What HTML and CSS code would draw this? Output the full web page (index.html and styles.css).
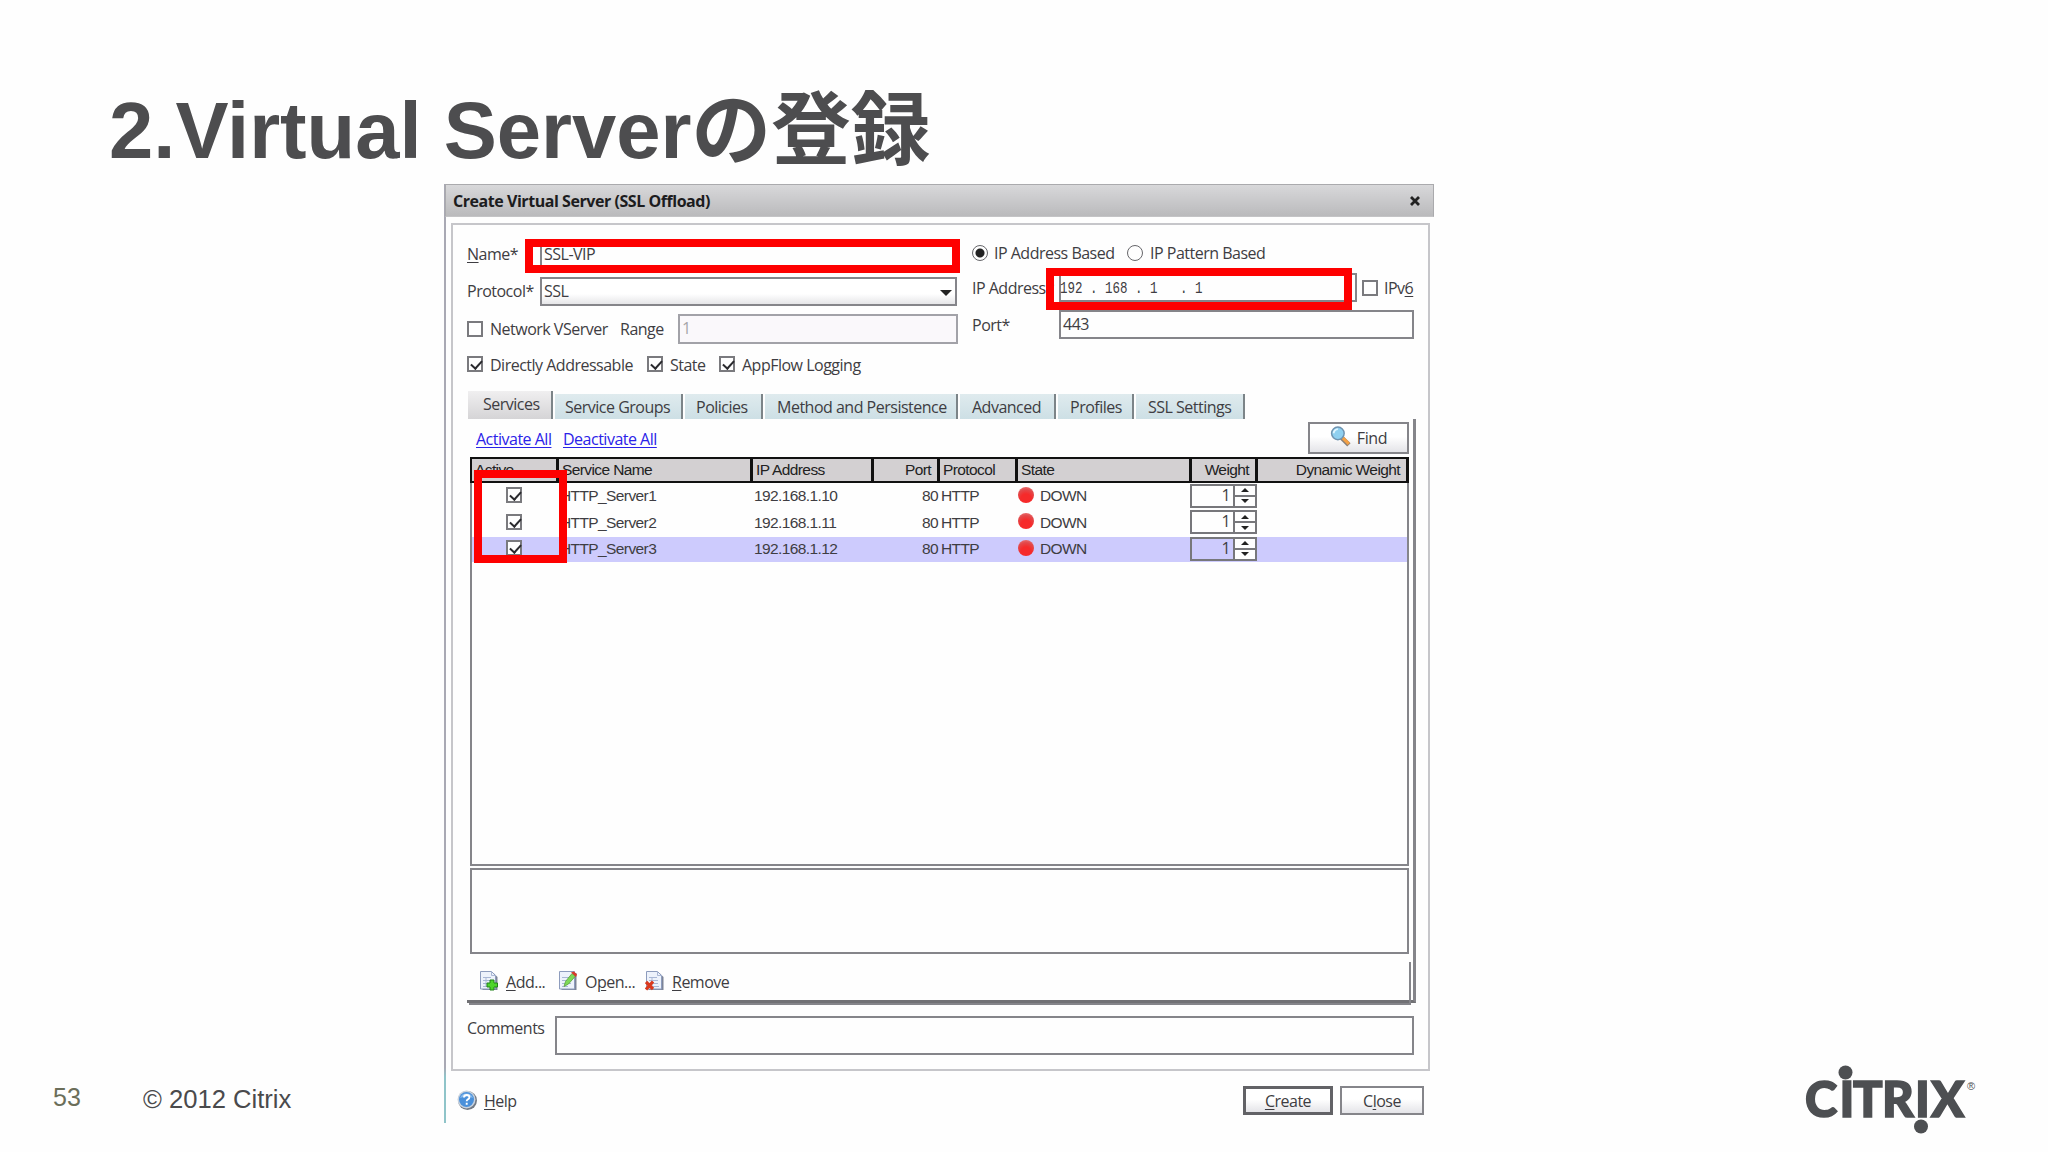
FILE: index.html
```
<!DOCTYPE html>
<html lang="ja">
<head>
    <meta charset="UTF-8">
    <title>2.Virtual Serverの登録</title>
    <link rel="stylesheet" href="styles.css">
</head>
<body>
    <div class="slide">
        <h1>2.Virtual Serverの登録</h1>

        <footer class="copyright">
            <span class="page">53</span>
            <span>© 2012 Citrix</span>
        </footer>

        <main class="dialog">
            <header class="titlebar">
                <h2>Create Virtual Server (SSL Offload)</h2>
                <svg class="close" viewBox="0 0 12 12"><path d="M2 2l8 8M10 2l-8 8"/></svg>
            </header>

            <section class="panel">
                <div class="form">
                    <div class="form-left">
                        <div class="row field">
                            <label><u>N</u>ame*</label>
                            <div class="input">SSL-VIP</div>
                        </div>
                        <div class="row field">
                            <label>Protocol*</label>
                            <div class="input select">SSL<i class="arrow-down"></i></div>
                        </div>
                        <div class="row network">
                            <i class="check"></i>
                            <label>Network VServer</label>
                            <label>Range</label>
                            <div class="input disabled">1</div>
                        </div>
                        <div class="row options">
                            <i class="check on"></i><label>Directly Addressable</label>
                            <i class="check on"></i><label>State</label>
                            <i class="check on"></i><label>AppFlow Logging</label>
                        </div>
                    </div>
                    <div class="form-right">
                        <div class="row radios">
                            <i class="radio on"></i><label>IP Address Based</label>
                            <i class="radio"></i><label>IP Pattern Based</label>
                        </div>
                        <div class="row ip">
                            <label>IP Address*</label>
                            <div class="input"><span class="ip-value">192 . 168 . 1   . 1</span></div>
                            <i class="check"></i>
                            <label>IPv<u>6</u></label>
                        </div>
                        <div class="row port">
                            <label>Port*</label>
                            <div class="input">443</div>
                        </div>
                    </div>
                </div>

                <nav class="tabs">
                    <span class="tab active">Services</span>
                    <span class="tab groups">Service Groups</span>
                    <span class="tab policies">Policies</span>
                    <span class="tab method">Method and Persistence</span>
                    <span class="tab advanced">Advanced</span>
                    <span class="tab profiles">Profiles</span>
                    <span class="tab settings">SSL Settings</span>
                </nav>

                <div class="tab-body">
                    <div class="toolbar">
                        <a>Activate All</a>
                        <a>Deactivate All</a>
                        <div class="button find">
                            <svg viewBox="0 0 20 20">
                                <path d="M11 11l7 7" stroke="#8a8078" stroke-width="4.5"/>
                                <path d="M11.5 10.5l6.5 6.5" stroke="#f5a145" stroke-width="3"/>
                                <circle cx="7.5" cy="7" r="6" fill="#8fd0f0" stroke="#6f93b0" stroke-width="1.4"/>
                                <path d="M3.5 7a4 4 0 0 1 4-4" fill="none" stroke="#e2f6ff" stroke-width="1.8"/>
                            </svg>
                            Find
                        </div>
                    </div>

                    <div class="services">
                        <div class="tr head">
                            <span>Active</span><span>Service Name</span><span>IP Address</span><span class="right">Port</span><span>Protocol</span><span>State</span><span class="right">Weight</span><span class="right">Dynamic Weight</span>
                        </div>
                        <div class="tr">
                            <span><i class="check on"></i></span><span>HTTP_Server1</span><span>192.168.1.10</span><span class="right">80</span><span>HTTP</span><span><i class="ball"></i>DOWN</span>
                            <span class="spinner"><b>1</b><i class="up"></i><i class="down"></i></span><span></span>
                        </div>
                        <div class="tr">
                            <span><i class="check on"></i></span><span>HTTP_Server2</span><span>192.168.1.11</span><span class="right">80</span><span>HTTP</span><span><i class="ball"></i>DOWN</span>
                            <span class="spinner"><b>1</b><i class="up"></i><i class="down"></i></span><span></span>
                        </div>
                        <div class="tr selected">
                            <span><i class="check on"></i></span><span>HTTP_Server3</span><span>192.168.1.12</span><span class="right">80</span><span>HTTP</span><span><i class="ball"></i>DOWN</span>
                            <span class="spinner"><b>1</b><i class="up"></i><i class="down"></i></span><span></span>
                        </div>
                    </div>

                    <div class="details"></div>

                    <div class="actions">
                        <svg viewBox="0 0 20 20">
                            <path d="M3.500 2.500h11l4 4v13h-15z" fill="#7d8497"/>
                            <path d="M1.500 1h11l4 4v13.500h-15z" fill="#edf2fb" stroke="#8d9cbd"/>
                            <path d="M12.500 1v4h4M4 7h8M4 10h9M4 13h9M4 16h6M7 7v9" fill="none" stroke="#a9b7d5"/>
                            <path d="M11 9.500h4v3h3.500v4H15v3h-4v-3H8v-4h3z" fill="#4fd52c" stroke="#22831a"/>
                        </svg>
                        <span class="add"><u>A</u>dd...</span>
                        <svg viewBox="0 0 20 20">
                            <path d="M3.500 2.500h15v17h-15z" fill="#7d8497"/>
                            <path d="M1.500 1h15v17.500h-15z" fill="#edf2fb" stroke="#8d9cbd"/>
                            <path d="M4 7h8M4 10h9M4 13h9M4 16h6" fill="none" stroke="#a9b7d5"/>
                            <path d="M6 16l1.500-5L14 3l3.500 2.500-7 8z" fill="#7ed957" stroke="#58a03a" stroke-width=".8"/>
                            <path d="M13 2l3-1 3 3-1 2.500z" fill="#d83a2a"/>
                        </svg>
                        <span class="open">O<u>p</u>en...</span>
                        <svg viewBox="0 0 20 20">
                            <path d="M3.500 2.500h11l4 4v13h-15z" fill="#7d8497"/>
                            <path d="M1.500 1h11l4 4v13.500h-15z" fill="#edf2fb" stroke="#8d9cbd"/>
                            <path d="M12.500 1v4h4M4 7h8M4 10h9M4 13h9M8 16h6M7 7v9" fill="none" stroke="#a9b7d5"/>
                            <path d="M1 11.500l7 7M8 11l-7 8" stroke="#d9391e" stroke-width="3.200"/>
                        </svg>
                        <span><u>R</u>emove</span>
                    </div>
                </div>

                <div class="comments">
                    <label>Comments</label>
                    <div class="input"></div>
                </div>
            </section>

            <div class="buttons">
                <svg viewBox="0 0 20 20">
                    <circle cx="10.500" cy="10.500" r="9.500" fill="#737a84"/>
                    <circle cx="9.500" cy="9.500" r="9" fill="#c8d2de"/>
                    <circle cx="9.500" cy="9.500" r="7.500" fill="#4a90da"/>
                    <path d="M3 8a7 7 0 0 1 13 0q-6-3-13 0" fill="#86b9ec"/>
                    <path d="M7 7.500q0-2.500 2.700-2.500t2.700 2.200q0 1.300-1.500 2.100-1.200.7-1.200 1.900M9.700 12.800v2" fill="none" stroke="#fff" stroke-width="1.900"/>
                </svg>
                <span class="help"><u>H</u>elp</span>
                <div class="button create"><span><u>C</u>reate</span></div>
                <div class="button"><span>C<u>l</u>ose</span></div>
            </div>

            <div class="highlight mark-name"></div>
            <div class="highlight mark-ip"></div>
            <div class="highlight mark-active"></div>
        </main>

        <svg class="logo" viewBox="0 0 180 80">
            <text x="0 34.500 48 77 110 126" y="53">CITRIX</text>
            <circle cx="40.500" cy="8.500" r="7"/>
            <circle cx="116" cy="62.500" r="7"/>
            <text class="reg" x="162" y="26">®</text>
        </svg>
    </div>
</body>
</html>
```
FILE: styles.css
```
* {
    box-sizing: border-box;
}
body {
    margin: 0;
    background: #fefefe;
    color: #3e3d42;
    font-family: "Open Sans", "Noto Sans", sans-serif;
    font-size: 16px;
}
.slide {
    width: 2048px;
    height: 1152px;
    display: grid;
    grid-template-columns: 444px 990px 1fr;
    grid-template-rows: 184px 939px;
    overflow: hidden;
}
h1 {
    grid-column: 1 / -1;
    margin: 0;
    padding: 73px 0 0 109px;
    font: bold 79.6px/116px "Liberation Sans", "Noto Sans CJK JP", sans-serif;
    color: #4d4d4f;
    white-space: nowrap;
}
.copyright {
    align-self: end;
    display: flex;
    padding: 0 0 9px 53px;
    font: 25.6px/30px "Liberation Sans", sans-serif;
    color: #4a4a4c;
}
.page {
    width: 90px;
    font-size: 25px;
    line-height: 27px;
    color: #6b6e5a;
}
u {
    text-underline-offset: 2px;
}
label, .tab, .actions span, .buttons span, a {
    white-space: nowrap;
    letter-spacing: -0.5px;
}

/* dialog */
.dialog {
    position: relative;
    border-left: 2px solid;
    border-image: linear-gradient(#a9a9b4 94%, #8fc4c9 95%) 1;
}
.titlebar {
    height: 33px;
    margin-left: -1px;
    padding: 0 12px 0 7px;
    display: flex;
    align-items: center;
    justify-content: space-between;
    border: 1px solid #aaaaad;
    border-bottom-color: #c4c4c6;
    background: linear-gradient(#d8d8da, #bababc);
}
h2 {
    margin: 0;
    font-size: 16px;
    font-weight: 700;
    letter-spacing: -0.45px;
    color: #1c1c1e;
}
.close {
    width: 12px;
    height: 12px;
    fill: none;
    stroke: #222;
    stroke-width: 2.8;
}
.panel {
    margin: 6px 4px 0 5px;
    height: 848px;
    padding: 15px 14px 0;
    border: 2px solid #c6c6ca;
}

/* form */
.form {
    display: grid;
    grid-template-columns: 491px 442px;
    column-gap: 14px;
}
.form-left {
    display: grid;
    grid-template-rows: 29px 29px 30px 24px;
    row-gap: 8px;
}
.form-right {
    display: grid;
    grid-template-rows: 25px 29px 29px;
    row-gap: 8px;
    align-content: start;
}
.row {
    display: grid;
    align-items: center;
}
.field {
    grid-template-columns: 73px 417px;
}
.field label {
    margin-top: -1px;
}
.network {
    grid-template-columns: 23px 130px 58px 280px;
}
.options {
    grid-template-columns: 23px 157px 23px 49px 23px auto;
}
.options label {
    margin-top: 1px;
}
.radios {
    grid-template-columns: 22px 133px 23px auto;
}
.ip {
    grid-template-columns: 87px 298px 5px 22px auto;
}
.ip .check {
    grid-column: 4;
}
.port {
    grid-template-columns: 87px 355px;
}
.input {
    position: relative;
    height: 100%;
    padding: 0 0 2px 2px;
    display: flex;
    align-items: center;
    border: 2px solid #85858a;
    background: #fefefe;
    letter-spacing: -0.5px;
}
.select {
    background: linear-gradient(#fff 60%, #e6e6e8);
}
.arrow-down {
    position: absolute;
    right: 3px;
    top: 11px;
    border: 6px solid transparent;
    border-top-color: #222;
    border-bottom: 0;
}
.disabled {
    background: #faf8fb;
    border-color: #a2a2a8;
    color: #a6a6aa;
}
.ip-value {
    margin: 3px 0 0 -3px;
    font: 17px "Liberation Mono", monospace;
    letter-spacing: 0;
    white-space: pre;
    transform: scaleX(.735);
    transform-origin: left;
}
.check {
    display: block;
    width: 16px;
    height: 16px;
    border: 2px solid #7a7a7e;
    background: #fefefe;
}
.check.on::after {
    content: "";
    display: block;
    width: 9px;
    height: 5px;
    margin: 2px 0 0 2px;
    border: solid #2a2a2e;
    border-width: 0 0 2.5px 2.5px;
    transform: rotate(-48deg);
}
.radio {
    width: 16px;
    height: 16px;
    border: 1.5px solid #66666a;
    border-radius: 50%;
}
.radio.on {
    background: radial-gradient(#222 0 4px, transparent 5px);
}

/* tabs */
.tabs {
    display: flex;
    align-items: flex-end;
    gap: 2px;
    height: 28px;
    margin-top: 15px;
    margin-left: 1px;
}
.tab {
    height: 25px;
    line-height: 27px;
    border-right: 2px solid #7c8488;
    background: linear-gradient(#dfebee, #cddfe5);
}
.tab.active {
    width: 85px;
    height: 28px;
    padding-left: 15px;
    background: linear-gradient(#f0eff0, #d5d4d6);
}
.groups {
    width: 128px;
    padding-left: 10px;
}
.policies {
    width: 78px;
    padding-left: 11px;
}
.method {
    width: 193px;
    padding-left: 12px;
}
.advanced {
    width: 96px;
    padding-left: 12px;
}
.profiles {
    width: 76px;
    padding-left: 12px;
}
.settings {
    width: 109px;
    padding-left: 12px;
}
.tab-body {
    width: 949px;
    height: 584px;
    padding: 3px 4px 0 3px;
    border-right: 3px solid #85858a;
    border-bottom: 3px solid #717175;
}
.toolbar {
    display: flex;
    height: 32px;
    padding-left: 6px;
}
a {
    width: 87px;
    line-height: 35px;
    color: #2b22e8;
    text-decoration: underline;
    text-underline-offset: 2px;
}
.button {
    height: 29px;
    display: flex;
    align-items: center;
    justify-content: center;
    border: 2px solid #85858a;
    background: linear-gradient(#fff 45%, #e4e4e8);
    letter-spacing: -0.4px;
}
.find {
    width: 101px;
    height: 32px;
    margin-left: auto;
    gap: 6px;
}
.find svg {
    width: 21px;
    height: 21px;
    margin-top: -4px;
}

/* services table */
.services {
    height: 409px;
    margin-top: 3px;
    border: 2px solid #85858a;
    border-top: 0;
    font: 15.5px "Liberation Sans", Arial, sans-serif;
    letter-spacing: -0.6px;
}
.tr {
    display: grid;
    grid-template-columns: 87px 194px 121px 66px 78px 174px 66px 1fr;
    height: 25px;
    margin-top: 1.6px;
}
.tr > span {
    display: flex;
    align-items: center;
    padding-left: 1px;
}
.tr > span:first-child {
    padding-left: 34px;
}
.tr > .right {
    justify-content: flex-end;
    padding-right: 2px;
}
.head {
    height: 26px;
    margin: 0 -2px -1px;
    border: solid #111;
    border-width: 2px 0 2px 2px;
    background: #d3d0d2;
    color: #222;
}
.tr.head > span {
    border-right: 3px solid #111;
    padding-left: 3px;
}
.tr.head > .right {
    padding-right: 6px;
}
.selected {
    background: #cdcbfd;
}
.check.on {
    flex: none;
}
.tr .check {
    margin-top: -2px;
}
.ball {
    width: 16px;
    height: 16px;
    margin: -3px 6px 0 -1px;
    border-radius: 50%;
    background: radial-gradient(circle at 50% 75%, #f62a2a 35%, #e2494b 65%, #f08a8a);
}
.tr > .spinner {
    display: grid;
    grid-template: 1fr 1fr / 1fr 20px;
    height: 24px;
    margin: 0 1px 0 -2px;
    padding: 0;
    border: 2px solid #77777b;
    align-items: stretch;
}
.spinner b {
    grid-row: 1 / 3;
    padding-right: 3px;
    border-right: 2px solid #77777b;
    font: 16px/19px "Open Sans", sans-serif;
    text-align: right;
}
.spinner i {
    display: grid;
    place-items: center;
    background: #fefefe;
}
.spinner .up {
    border-bottom: 1px solid #77777b;
}
.spinner .down {
    border-top: 1px solid #77777b;
}
.spinner i::after {
    content: "";
    border: 4px solid transparent;
    border-top: 0;
    border-bottom-color: #222;
}
.spinner .down::after {
    transform: rotate(180deg);
}
.details {
    height: 86px;
    margin-top: 2px;
    border: 2px solid #85858a;
}
.actions {
    height: 43px;
    margin: 8px -2px 0 -1px;
    padding: 0 0 4px 10px;
    display: flex;
    align-items: center;
    border-right: 2px solid #85858a;
    border-bottom: 2px solid #85858a;
}
.actions svg {
    width: 20px;
    height: 21px;
    margin-right: 7px;
}
.actions span {
    margin-top: 2px;
}
.add {
    width: 52px;
}
.open {
    width: 60px;
}
.comments {
    display: flex;
    margin-top: 13px;
}
.comments label {
    width: 88px;
    line-height: 24px;
}
.comments .input {
    width: 859px;
    height: 39px;
}
.buttons {
    display: flex;
    align-items: center;
    height: 29px;
    margin: 15px 10px 0 11px;
}
.buttons svg {
    width: 20px;
    height: 20px;
    margin-top: -1px;
}
.help {
    margin: 0 auto 0 7px;
}
.buttons .button {
    width: 84px;
}
.buttons .create {
    width: 90px;
    margin-right: 7px;
    border: 3px solid #626266;
}

/* red marks over the dialog */
.highlight {
    position: absolute;
    border: 8px solid #fe0000;
}
.mark-name {
    left: 79px;
    top: 55px;
    width: 435px;
    height: 34px;
}
.mark-ip {
    left: 600px;
    top: 84px;
    width: 306px;
    height: 42px;
}
.mark-active {
    left: 28px;
    top: 286px;
    width: 93px;
    height: 93px;
}

.logo {
    align-self: end;
    width: 180px;
    height: 80px;
    margin: 0 0 -21px 371px;
    fill: #4d4f52;
    stroke: #4d4f52;
    stroke-width: 1.6;
    font: 900 49px Lato, sans-serif;
}
.logo circle, .reg {
    stroke: none;
}
.reg {
    font: 11px "Liberation Sans", sans-serif;
}
```
